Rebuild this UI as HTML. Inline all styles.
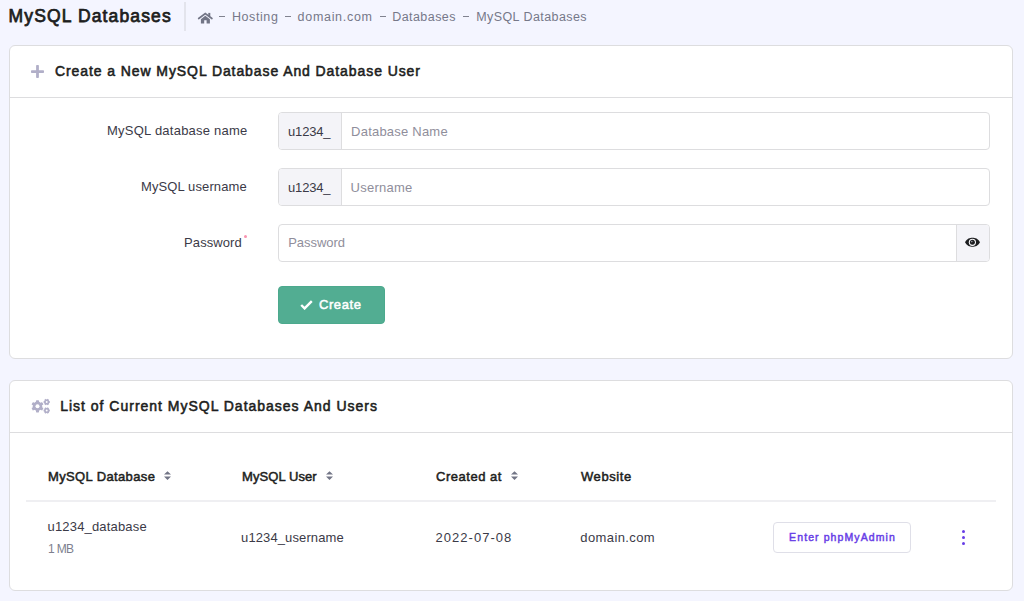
<!DOCTYPE html>
<html>
<head>
<meta charset="utf-8">
<title>MySQL Databases</title>
<style>
*{box-sizing:border-box;margin:0;padding:0}
html,body{width:1024px;height:601px;overflow:hidden;background:#f4f5ff;font-family:"Liberation Sans",sans-serif;color:#36344d}
.a{position:absolute;white-space:nowrap;line-height:1}
.card{position:absolute;left:9px;width:1004px;background:#fff;border:1px solid #dddddf;border-radius:6px}
.hd{position:absolute;left:0;top:0;width:100%;height:52px;border-bottom:1px solid #dddddf}
.ig{position:absolute;left:278px;width:712px;height:38px;border:1px solid #dddddf;border-radius:4px;background:#fff;overflow:hidden}
.pre{position:absolute;left:0;top:0;width:63px;height:36px;background:#f4f4f8;border-right:1px solid #dddddf}
.dash{position:absolute;top:16.3px;width:6px;height:1.1px;background:#80828f}
.dot{position:absolute;left:961.6px;width:3.6px;height:3.6px;border-radius:50%;background:#673de6}
</style>
</head>
<body>
<!-- page header -->
<div style="position:absolute;left:184px;top:2px;width:2px;height:29px;background:#e3e4ec"></div>
<svg style="position:absolute;left:195px;top:8px" width="22" height="20" viewBox="0 0 22 20">
  <path fill="#727586" d="M5.9 11.2 L10.3 7.7 L14.9 11.2 V15.4 H11.6 V12.3 H9.2 V15.4 H5.9 Z"/>
  <path fill="none" stroke="#727586" stroke-width="1.7" stroke-linecap="round" d="M3.7 10.5 L10.3 5.6 L16.9 10.5"/>
  <rect x="13.3" y="4.9" width="2" height="3.3" fill="#727586"/>
</svg>
<div class="dash" style="left:219px"></div>
<div class="dash" style="left:285px"></div>
<div class="dash" style="left:380px"></div>
<div class="dash" style="left:463px"></div>

<!-- card 1 -->
<div class="card" style="top:45px;height:314px"><div class="hd"></div></div>
<svg style="position:absolute;left:31.2px;top:64.8px" width="13" height="13" viewBox="0 0 13 13">
  <rect x="5.1" y="0" width="2.8" height="13" rx="0.8" fill="#b1afc8"/>
  <rect x="0" y="5.2" width="13" height="2.8" rx="0.8" fill="#b1afc8"/>
</svg>
<div class="ig" style="top:112px"><div class="pre"></div></div>
<div class="ig" style="top:168px"><div class="pre"></div></div>
<div class="ig" style="top:224px"><div class="pre" style="left:auto;right:0;width:33px;border-right:0;border-left:1px solid #dddddf"></div></div>
<div style="position:absolute;left:243.5px;top:234.7px;width:3.4px;height:3.4px;border-radius:50%;background:#f893b0"></div>
<svg style="position:absolute;left:964px;top:236px" width="18" height="13" viewBox="0 0 18 13">
  <path fill="#1d1e20" d="M1 6.3 C3 2.5 5.8 1.8 8.5 1.8 C11.2 1.8 14 2.5 16 6.3 C14 10.1 11.2 10.8 8.5 10.8 C5.8 10.8 3 10.1 1 6.3Z"/>
  <circle cx="8.4" cy="6.3" r="3.6" fill="#fafafc"/>
  <circle cx="8.4" cy="6.3" r="2.5" fill="#1d1e20"/>
  <circle cx="7.8" cy="5.6" r="0.8" fill="#9a9aa5"/>
</svg>
<div style="position:absolute;left:278px;top:286px;width:107px;height:38px;background:#52ad92;border:1px solid #4ca98d;border-radius:4px"></div>
<svg style="position:absolute;left:300px;top:300px" width="13" height="10" viewBox="0 0 13 10">
  <path fill="none" stroke="#fff" stroke-width="2.4" d="M1.2 5 L4.6 8.4 L11.8 1.2"/>
</svg>

<!-- card 2 -->
<div class="card" style="top:380px;height:211px"><div class="hd"></div></div>
<svg style="position:absolute;left:31px;top:398px" width="20" height="17" viewBox="0 0 20 17">
  <g fill="#b1afc8">
    <circle cx="6.5" cy="8.3" r="4.7"/>
    <g transform="translate(6.5 8.3)">
      <rect x="-1.5" y="-6.1" width="3" height="12.2" rx="0.6"/>
      <rect x="-1.5" y="-6.1" width="3" height="12.2" rx="0.6" transform="rotate(60)"/>
      <rect x="-1.5" y="-6.1" width="3" height="12.2" rx="0.6" transform="rotate(120)"/>
    </g>
    <circle cx="15.7" cy="4" r="2.6"/>
    <g transform="translate(15.7 4)">
      <rect x="-0.9" y="-3.1" width="1.8" height="6.2" transform="rotate(30)"/>
      <rect x="-0.9" y="-3.1" width="1.8" height="6.2" transform="rotate(90)"/>
      <rect x="-0.9" y="-3.1" width="1.8" height="6.2" transform="rotate(150)"/>
    </g>
    <circle cx="15.7" cy="12.5" r="2.6"/>
    <g transform="translate(15.7 12.5)">
      <rect x="-0.9" y="-3.1" width="1.8" height="6.2" transform="rotate(30)"/>
      <rect x="-0.9" y="-3.1" width="1.8" height="6.2" transform="rotate(90)"/>
      <rect x="-0.9" y="-3.1" width="1.8" height="6.2" transform="rotate(150)"/>
    </g>
  </g>
  <circle cx="6.5" cy="8.3" r="2" fill="#fff"/>
  <circle cx="15.7" cy="4" r="0.95" fill="#fff"/>
  <circle cx="15.7" cy="12.5" r="0.95" fill="#fff"/>
</svg>
<svg style="position:absolute;left:164px;top:470.5px" width="7" height="10" viewBox="0 0 7 10"><path fill="#727586" d="M0 3.6 L3.5 0.2 L7 3.6Z M0 5.5 L3.5 8.9 L7 5.5Z"/></svg>
<svg style="position:absolute;left:326px;top:470.5px" width="7" height="10" viewBox="0 0 7 10"><path fill="#727586" d="M0 3.6 L3.5 0.2 L7 3.6Z M0 5.5 L3.5 8.9 L7 5.5Z"/></svg>
<svg style="position:absolute;left:511px;top:470.5px" width="7" height="10" viewBox="0 0 7 10"><path fill="#727586" d="M0 3.6 L3.5 0.2 L7 3.6Z M0 5.5 L3.5 8.9 L7 5.5Z"/></svg>
<div style="position:absolute;left:26px;top:500px;width:970px;height:2px;background:#efeff2"></div>
<div style="position:absolute;left:773px;top:522px;width:138px;height:31px;border:1px solid #dfdfe8;border-radius:4px;background:#fff"></div>
<div class="dot" style="top:529.7px"></div>
<div class="dot" style="top:535.7px"></div>
<div class="dot" style="top:541.8px"></div>

<!-- text -->
<div class="a" style="left:8.6px;top:7.8px;font-size:17.5px;color:#1d1e20;letter-spacing:1.136px;-webkit-text-stroke:0.75px #1d1e20">MySQL Databases</div>
<div class="a" style="left:231.9px;top:11.22px;font-size:12.5px;color:#767889;letter-spacing:0.597px">Hosting</div>
<div class="a" style="left:297.6px;top:11.22px;font-size:12.5px;color:#767889;letter-spacing:0.696px">domain.com</div>
<div class="a" style="left:392.2px;top:11.22px;font-size:12.5px;color:#767889;letter-spacing:0.440px">Databases</div>
<div class="a" style="left:476.2px;top:11.22px;font-size:12.5px;color:#767889;letter-spacing:0.427px">MySQL Databases</div>
<div class="a" style="left:55.0px;top:64.2px;font-size:14px;color:#1d1e20;letter-spacing:0.913px;-webkit-text-stroke:0.55px #1d1e20">Create a New MySQL Database And Database User</div>
<div class="a" style="left:107.0px;top:124px;font-size:13px;color:#3b3a47;letter-spacing:0.236px">MySQL database name</div>
<div class="a" style="left:288.0px;top:125px;font-size:13px;color:#3b3a47;letter-spacing:-0.160px">u1234_</div>
<div class="a" style="left:351.1px;top:125px;font-size:13px;color:#8f8e9b;letter-spacing:0.216px">Database Name</div>
<div class="a" style="left:141.0px;top:180px;font-size:13px;color:#3b3a47;letter-spacing:0.106px">MySQL username</div>
<div class="a" style="left:288.0px;top:181px;font-size:13px;color:#3b3a47;letter-spacing:-0.160px">u1234_</div>
<div class="a" style="left:350.6px;top:181px;font-size:13px;color:#8f8e9b;letter-spacing:0.232px">Username</div>
<div class="a" style="left:184.1px;top:236px;font-size:13px;color:#3b3a47;letter-spacing:0.083px">Password</div>
<div class="a" style="left:288.2px;top:236px;font-size:13px;color:#8f8e9b;letter-spacing:-0.023px">Password</div>
<div class="a" style="left:318.9px;top:298.3px;font-size:13px;color:#ffffff;letter-spacing:0.612px;-webkit-text-stroke:0.5px #ffffff">Create</div>
<div class="a" style="left:60.25px;top:399px;font-size:14px;color:#1d1e20;letter-spacing:0.985px;-webkit-text-stroke:0.55px #1d1e20">List of Current MySQL Databases And Users</div>
<div class="a" style="left:48.0px;top:469.5px;font-size:13px;color:#1d1e20;letter-spacing:0.367px;-webkit-text-stroke:0.5px #1d1e20">MySQL Database</div>
<div class="a" style="left:242.0px;top:469.5px;font-size:13px;color:#1d1e20;letter-spacing:0.074px;-webkit-text-stroke:0.5px #1d1e20">MySQL User</div>
<div class="a" style="left:436.0px;top:469.5px;font-size:13px;color:#1d1e20;letter-spacing:0.522px;-webkit-text-stroke:0.5px #1d1e20">Created at</div>
<div class="a" style="left:581.0px;top:469.5px;font-size:13px;color:#1d1e20;letter-spacing:0.567px;-webkit-text-stroke:0.5px #1d1e20">Website</div>
<div class="a" style="left:47.5px;top:520px;font-size:13px;color:#3b3a47;letter-spacing:0.178px">u1234_database</div>
<div class="a" style="left:48.0px;top:542.7px;font-size:12px;color:#7d7f8e;letter-spacing:-0.656px">1 MB</div>
<div class="a" style="left:241.1px;top:531px;font-size:13px;color:#3b3a47;letter-spacing:0.105px">u1234_username</div>
<div class="a" style="left:435.6px;top:531px;font-size:13px;color:#3b3a47;letter-spacing:1.018px">2022-07-08</div>
<div class="a" style="left:580.3px;top:531px;font-size:13px;color:#3b3a47;letter-spacing:0.390px">domain.com</div>
<div class="a" style="left:789.1px;top:532.41px;font-size:10.5px;color:#673de6;letter-spacing:1.096px;-webkit-text-stroke:0.45px #673de6">Enter phpMyAdmin</div>
</body>
</html>
